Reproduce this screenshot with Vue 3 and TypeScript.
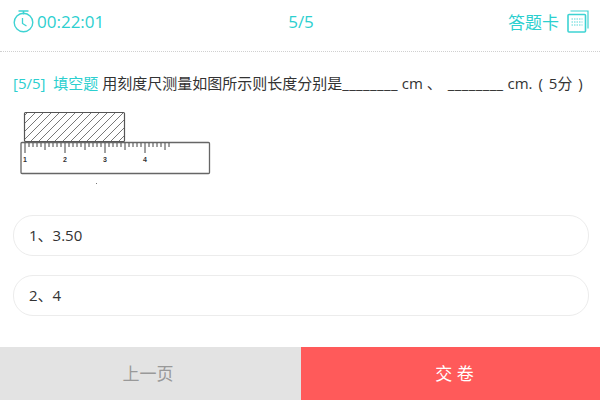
<script setup lang="ts">
const minorTicks: number[] = [];
for (let i = 0; i <= 36; i++) {
  minorTicks.push(i);
}

// diagonal lines of the hatched block, 8px apart
const hatchLines: number[] = [];
for (let x = 14; x < 145; x += 8) {
  hatchLines.push(x);
}

const rulerLabels = [1, 2, 3, 4];
const answers = ["3.50", "4"];
</script>

<template>
  <div class="page">
    <header class="top">
      <div class="timer">
        <svg class="clock" width="21" height="23" viewBox="0 0 21 23" fill="none" stroke="#3ed3d3">
          <path d="M5.5 1h10M10.5 1v3.5" stroke-width="1.5" />
          <circle cx="10.5" cy="12.5" r="9.3" stroke-width="1.4" />
          <path d="M9.5 8v5.5l4 2.5" stroke-width="1.3" />
        </svg>
        <span>00:22:01</span>
      </div>
      <div class="count">5/5</div>
      <div class="card">
        <span>答题卡</span>
        <svg width="22" height="23" viewBox="0 0 22 23" fill="none" stroke="#3ed3d3">
          <path d="M3.5 1H21V18.5" stroke-width="1.2" />
          <rect x="1" y="4.5" width="17.5" height="17.5" rx="1" stroke-width="1.6" />
          <path d="M4.5 9h11M4.5 12h11M4.5 15h11" stroke="#8fe5e5" stroke-width="1.6" stroke-dasharray="1.5 1" />
        </svg>
      </div>
    </header>

    <main class="body">
      <p class="question">
        <span class="tag">[5/5]&nbsp; 填空题</span>
        用刻度尺测量如图所示则长度分别是<span class="blank">________</span> cm 、<span class="blank gap">________</span> cm.<span class="score">( 5分 )</span>
      </p>

      <svg class="figure" width="200" height="75" viewBox="0 0 200 75">
        <defs>
          <clipPath id="block">
            <rect x="10.5" y="3.5" width="100" height="29" />
          </clipPath>
        </defs>
        <g clip-path="url(#block)">
          <line
            v-for="x in hatchLines"
            :key="x"
            :x1="x"
            y1="3"
            :x2="x - 30"
            y2="33"
            stroke="#555"
            stroke-width="0.8"
          />
        </g>
        <rect x="10.5" y="3.5" width="100" height="29" rx="1" fill="none" stroke="#555" stroke-width="1.2" />
        <rect x="7" y="33.5" width="188.5" height="31" rx="1" fill="#fff" stroke="#666" stroke-width="1.3" />
        <line
          v-for="i in minorTicks"
          :key="i"
          :x1="11 + i * 4"
          y1="34"
          :x2="11 + i * 4"
          :y2="i % 10 === 0 ? 44 : i % 5 === 0 ? 41 : 38"
          stroke="#444"
          stroke-width="1"
        />
        <text
          v-for="(n, i) in rulerLabels"
          :key="n"
          class="rulerNum"
          :x="11 + i * 40"
          y="53"
        >{{ n }}</text>
        <rect x="82" y="74" width="1" height="1" fill="#777" />
      </svg>

      <div class="answers">
        <div v-for="(answer, i) in answers" :key="i" class="answer">{{ i + 1 }}、{{ answer }}</div>
      </div>
    </main>

    <footer class="bottom">
      <div class="prev">上一页</div>
      <div class="submit">交 卷</div>
    </footer>
  </div>
</template>

<style scoped>
.page {
  width: 600px;
  height: 400px;
  display: flex;
  flex-direction: column;
  overflow: hidden;
  background: #fff;
  font-family: "Open Sans", "Noto Sans CJK SC", sans-serif;
}

.top {
  height: 52px;
  box-sizing: border-box;
  display: grid;
  grid-template-columns: 1fr 1fr 1fr;
  align-items: center;
  padding: 0 11px 8px 13px;
  border-bottom: 1px dotted #d0d0d0;
  color: #2ccfcf;
  font-size: 17px;
}

.timer {
  display: flex;
  align-items: center;
  gap: 3px;
}

.count {
  text-align: center;
}

.card {
  display: flex;
  align-items: center;
  justify-content: flex-end;
  gap: 8px;
}

.body {
  flex: 1;
  padding: 21px 11px 0 13px;
}

.question {
  margin: 0;
  font-size: 15px;
  line-height: 20px;
  color: #333;
  white-space: nowrap;
}

.tag {
  color: #2ccfcf;
}

.blank {
  letter-spacing: 0.4px;
}

.gap {
  margin-left: 6px;
}

.score {
  margin-left: 6px;
  word-spacing: 2px;
}

.figure {
  display: block;
  margin: 16px 0 0 1px;
}

.rulerNum {
  font-family: "Liberation Sans", sans-serif;
  font-size: 7px;
  font-weight: 700;
  text-anchor: middle;
  fill: #333;
}

.answers {
  display: flex;
  flex-direction: column;
  gap: 19px;
  margin-top: 31px;
}

.answer {
  height: 41px;
  box-sizing: border-box;
  padding: 0 15px;
  border: 1px solid #ececec;
  border-radius: 20px;
  line-height: 39px;
  font-size: 15px;
  color: #333;
}

.bottom {
  height: 53px;
  display: flex;
  font-size: 17px;
  line-height: 53px;
  text-align: center;
}

.prev {
  width: 301px;
  padding-right: 5px;
  box-sizing: border-box;
  background: #e3e3e3;
  color: #999;
}

.submit {
  flex: 1;
  padding-left: 8px;
  background: #ff5a5a;
  color: #fff;
}
</style>
